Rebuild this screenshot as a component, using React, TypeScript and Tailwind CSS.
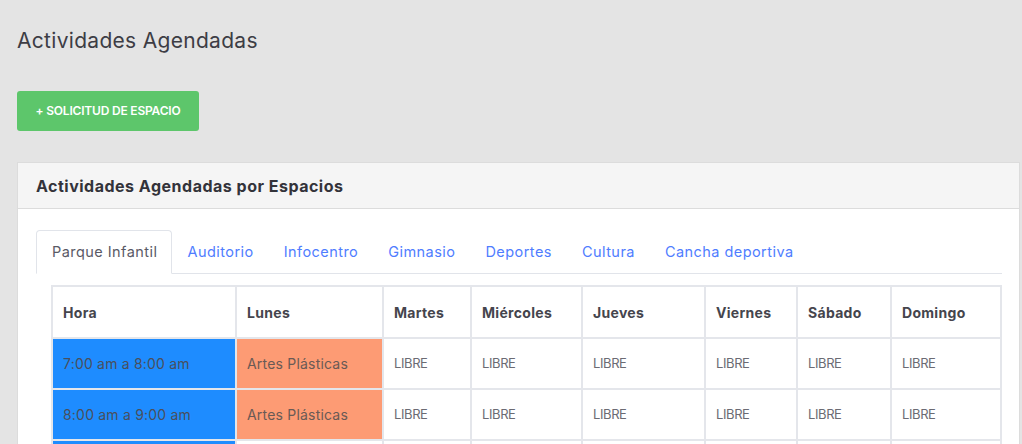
import React from 'react';

const tabs = ['Parque Infantil', 'Auditorio', 'Infocentro', 'Gimnasio', 'Deportes', 'Cultura', 'Cancha deportiva'];

type Col = { label: string; w: string };

const cols: Col[] = [
  { label: 'Hora', w: 'w-[184px]' },
  { label: 'Lunes', w: 'w-[147px]' },
  { label: 'Martes', w: 'w-[88px]' },
  { label: 'Miércoles', w: 'w-[111px]' },
  { label: 'Jueves', w: 'w-[123px]' },
  { label: 'Viernes', w: 'w-[92px]' },
  { label: 'Sábado', w: 'w-[94px]' },
  { label: 'Domingo', w: 'w-[110px]' },
];

const rows = [
  { hora: '7:00 am a 8:00 am', lunes: 'Artes Plásticas' },
  { hora: '8:00 am a 9:00 am', lunes: 'Artes Plásticas' },
  { hora: '9:00 am a 10:00 am', lunes: 'LIBRE' },
];

const App: React.FC = () => {
  return (
    <div
      className="min-h-[444px] h-[444px] overflow-hidden bg-[#e4e4e4] pl-[17px] pr-[2px] pt-[27px]"
      style={{ fontFamily: 'Inter, "Open Sans", sans-serif' }}
    >
      <h1 className="text-[21px] leading-[28px] text-[#3d3d45] tracking-[0.3px]">Actividades Agendadas</h1>

      <button className="mt-[36px] h-[40px] w-[182px] rounded-[3px] bg-[#5dc66b] text-[12px] font-semibold text-white tracking-[-0.2px] flex items-center justify-center">
        + SOLICITUD DE ESPACIO
      </button>

      <div className="mt-[31px] border border-[#dcdcdc] bg-white">
        <div className="h-[46px] bg-[#f5f5f5] border-b border-[#dcdcdc] flex items-center px-[18px]">
          <h2 className="text-[16px] font-bold text-[#33333a] tracking-[0.5px]">Actividades Agendadas por Espacios</h2>
        </div>

        <div className="pt-[21px] pl-[18px] pr-[17px]">
          <ul className="flex border-b border-[#e1e4ea] h-[44px]">
            {tabs.map((t, i) =>
              i === 0 ? (
                <li
                  key={t}
                  className="-mb-px flex items-center pl-[15px] pr-[14px] border border-[#e1e4ea] border-b-white rounded-t-[4px] bg-white text-[14.5px] tracking-[0.45px] text-[#5a5a66]"
                >
                  {t}
                </li>
              ) : (
                <li key={t} className="flex items-center px-[15px] text-[14.5px] tracking-[0.45px] text-[#4f7dff]">
                  {t}
                </li>
              )
            )}
          </ul>

          <table className="ml-[15px] mt-[11px] border-collapse text-[14px] tracking-[0.3px]">
            <thead>
              <tr className="h-[52px]">
                {cols.map(c => (
                  <th key={c.label} className={`${c.w} border-2 border-[#e4e6eb] px-[10px] text-left font-bold text-[#45454d]`}>
                    {c.label}
                  </th>
                ))}
              </tr>
            </thead>
            <tbody>
              {rows.map((r, i) => (
                <tr key={i} className="h-[51px]">
                  <td className="border-2 border-[#e4e6eb] bg-[#1e8cff] px-[10px] text-[#4a4f5c] tracking-[0.2px]">{r.hora}</td>
                  <td className={`border-2 border-[#e4e6eb] px-[10px] text-[#6a5a55] tracking-[0.2px] ${i < 2 ? 'bg-[#fd9b74]' : ''}`}>{r.lunes}</td>
                  {cols.slice(2).map(c => (
                    <td key={c.label} className="border-2 border-[#e4e6eb] px-[10px] text-[13px] text-[#6b6b73] tracking-[-0.4px]">
                      LIBRE
                    </td>
                  ))}
                </tr>
              ))}
            </tbody>
          </table>
        </div>
      </div>
    </div>
  );
};

export default App;
